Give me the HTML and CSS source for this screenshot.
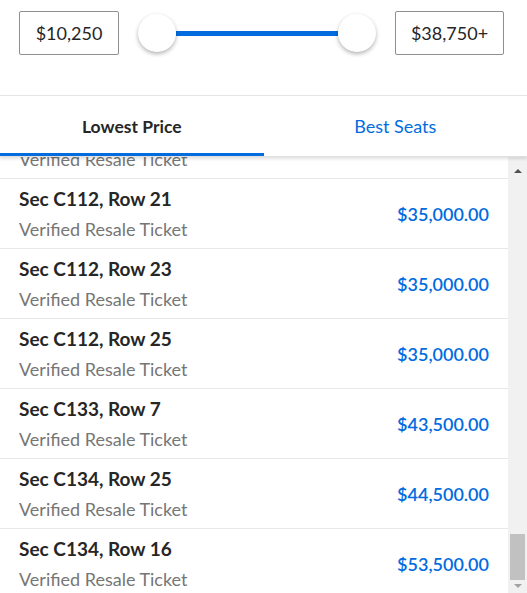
FILE: index.html
```html
<!DOCTYPE html>
<html lang="en">
<head>
  <meta charset="UTF-8" />
  <title>Tickets - Price Filter</title>
  <meta name="viewport" content="width=device-width, initial-scale=1.0" />
  <link rel="stylesheet" href="styles.css">
</head>
<body>

  <!-- Price range filter -->
  <section class="price-filter">
    <div class="price-box">$10,250</div>
    <div class="slider">
      <span class="knob"></span>
      <span class="track"></span>
      <span class="knob"></span>
    </div>
    <div class="price-box">$38,750+</div>
  </section>

  <!-- Sort tabs -->
  <nav class="tabs">
    <a href="#" class="tab active">Lowest Price</a>
    <a href="#" class="tab">Best Seats</a>
  </nav>

  <!-- Ticket list -->
  <main class="results">
    <div class="rows">
      <div class="row">
        <div>
          <div class="seat">Sec C112, Row 19</div>
          <div class="type">Verified Resale Ticket</div>
        </div>
        <div class="price">$35,000.00</div>
      </div>
      <div class="row">
        <div>
          <div class="seat">Sec C112, Row 21</div>
          <div class="type">Verified Resale Ticket</div>
        </div>
        <div class="price">$35,000.00</div>
      </div>
      <div class="row">
        <div>
          <div class="seat">Sec C112, Row 23</div>
          <div class="type">Verified Resale Ticket</div>
        </div>
        <div class="price">$35,000.00</div>
      </div>
      <div class="row">
        <div>
          <div class="seat">Sec C112, Row 25</div>
          <div class="type">Verified Resale Ticket</div>
        </div>
        <div class="price">$35,000.00</div>
      </div>
      <div class="row">
        <div>
          <div class="seat">Sec C133, Row 7</div>
          <div class="type">Verified Resale Ticket</div>
        </div>
        <div class="price">$43,500.00</div>
      </div>
      <div class="row">
        <div>
          <div class="seat">Sec C134, Row 25</div>
          <div class="type">Verified Resale Ticket</div>
        </div>
        <div class="price">$44,500.00</div>
      </div>
      <div class="row">
        <div>
          <div class="seat">Sec C134, Row 16</div>
          <div class="type">Verified Resale Ticket</div>
        </div>
        <div class="price">$53,500.00</div>
      </div>
    </div>

    <div class="scrollbar">
      <span class="arrow up"></span>
      <span class="thumb-space"></span>
      <span class="thumb"></span>
      <span class="arrow down"></span>
    </div>
  </main>

</body>
</html>
```

FILE: styles.css
```css
html {
  overflow: hidden;
}

body {
  font-family: "Lato", sans-serif;
  background-color: white;
  color: #262626;
  margin: 0;
  padding: 0;
}

.price-filter {
  height: 96px;
  box-sizing: border-box;
  padding: 11px 23px 0 19px;
  border-bottom: 1px solid #e6e6e6;
  display: flex;
  align-items: flex-start;
}

.price-box {
  width: 100px;
  height: 44px;
  box-sizing: border-box;
  border: 1px solid #8f8f8f;
  border-radius: 2px;
  display: flex;
  align-items: center;
  justify-content: center;
  font-size: 18px;
  color: #262626;
}

.price-box:last-child {
  width: 109px;
}

.slider {
  flex: 1;
  height: 44px;
  margin: 0 19px;
  display: flex;
  align-items: center;
}

.knob {
  width: 38px;
  height: 38px;
  border-radius: 50%;
  background: white;
  box-shadow: 0 2px 4px rgba(0, 0, 0, 0.3);
  flex-shrink: 0;
  position: relative;
  z-index: 1;
}

.track {
  flex: 1;
  height: 5px;
  background-color: #026cdf;
}

.tabs {
  display: flex;
  height: 60px;
  position: relative;
  z-index: 2;
  box-shadow: 0 2px 3px rgba(0, 0, 0, 0.12);
  border-bottom: 1px solid #e0e0e0;
}

.tab {
  flex: 1;
  display: flex;
  align-items: center;
  justify-content: center;
  box-sizing: border-box;
  padding-top: 3px;
  border-bottom: 3px solid transparent;
  text-decoration: none;
  font-size: 18px;
  color: #026cdf;
}

.tab.active {
  color: #262626;
  font-size: 17.5px;
  font-weight: bold;
  border-bottom-color: #026cdf;
}

.results {
  display: flex;
  align-items: flex-start;
  height: 436px;
}

.rows {
  flex: 1;
  height: 441px;
  overflow: hidden;
  display: flex;
  flex-direction: column;
  justify-content: flex-end;
}

.row {
  flex-shrink: 0;
  height: 70px;
  box-sizing: border-box;
  padding: 0 19px;
  border-top: 1px solid #e8e8e8;
  display: flex;
  align-items: center;
  justify-content: space-between;
}

.seat {
  font-size: 19px;
  font-weight: bold;
  line-height: 31px;
}

.type {
  font-size: 18px;
  color: #767676;
  line-height: 31px;
}

.price {
  font-size: 18px;
  font-weight: 600;
  color: #026cdf;
}

.scrollbar {
  width: 19px;
  height: 436px;
  background-color: #f1f1f1;
  display: flex;
  flex-direction: column;
  align-items: center;
}

.arrow {
  width: 0;
  height: 0;
  border-left: 4px solid transparent;
  border-right: 4px solid transparent;
}

.arrow.up {
  margin: 12px 0 0;
  border-bottom: 4px solid #505050;
}

.arrow.down {
  margin: 4px 0 5px;
  border-top: 4px solid #a3a3a3;
}

.thumb-space {
  flex: 1;
}

.thumb {
  width: 15px;
  height: 46px;
  background-color: #c1c1c1;
}
```
